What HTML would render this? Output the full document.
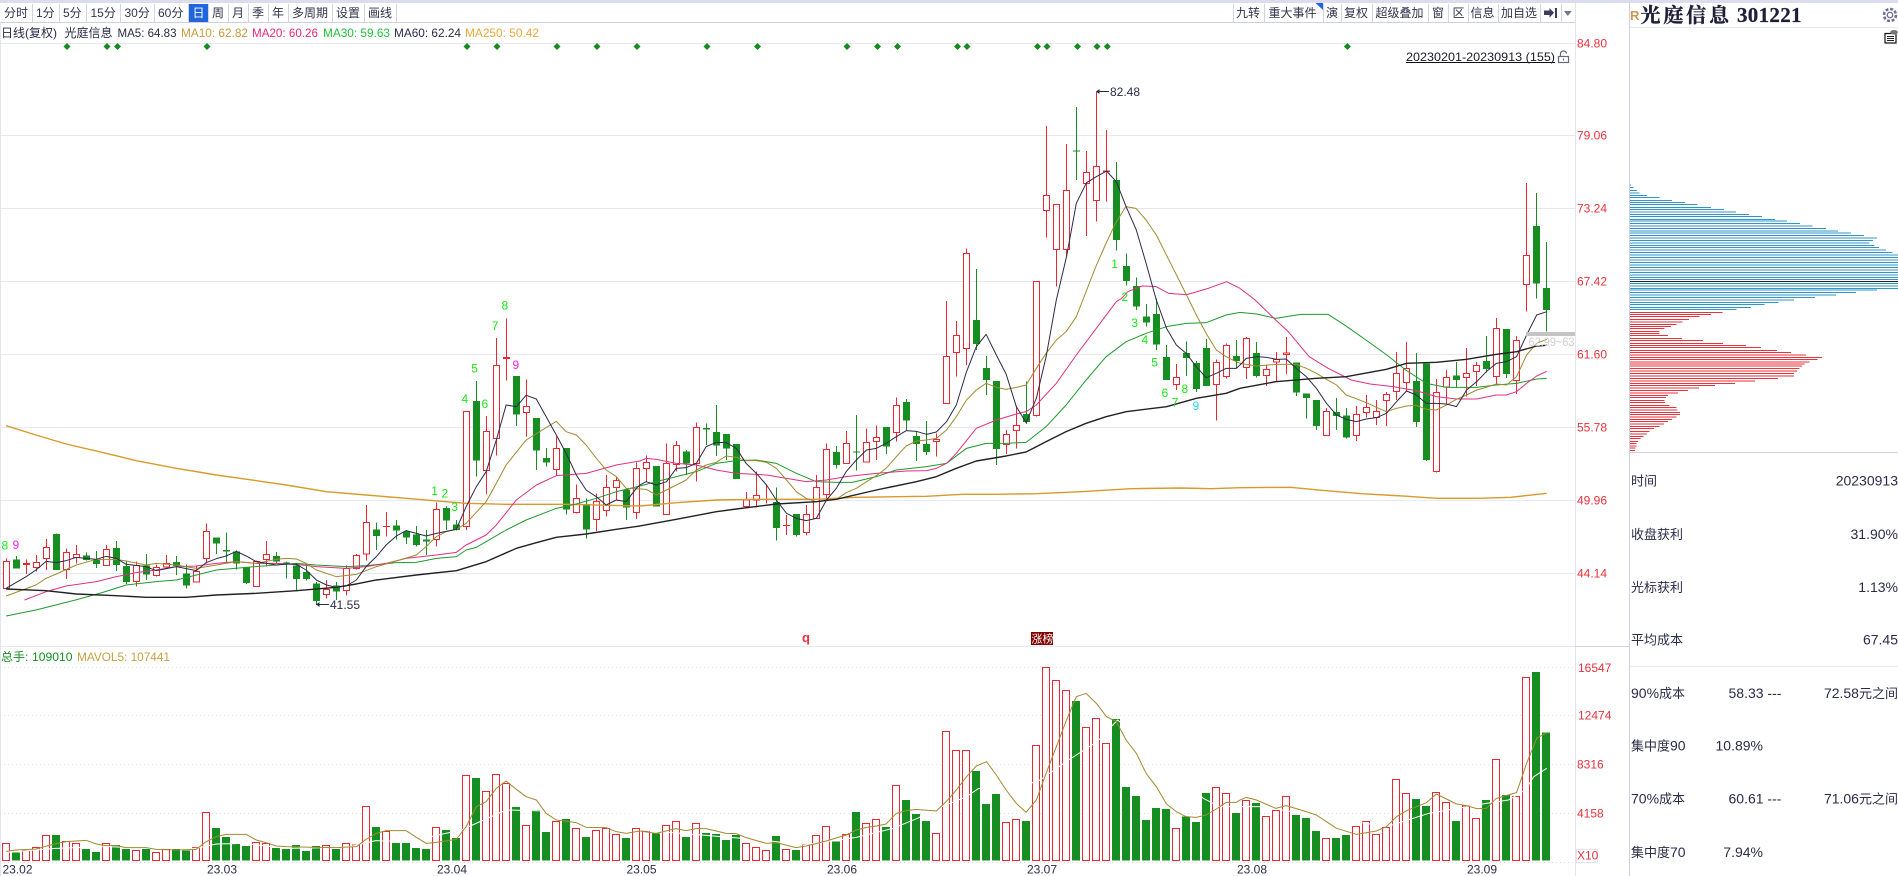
<!DOCTYPE html>
<html lang="zh-CN"><head><meta charset="utf-8"><title>光庭信息 301221</title>
<style>
html,body{margin:0;padding:0;background:#fff;overflow:hidden}
svg{display:block;font-family:"Liberation Sans","Noto Sans CJK SC",sans-serif;font-size:12px}
.l{fill:none;stroke-width:1;vector-effect:non-scaling-stroke;stroke-linejoin:round}
.h{stroke-width:1.4}
.c{vector-effect:non-scaling-stroke;shape-rendering:crispEdges;stroke-width:1}
.n{fill:#2b2b4a}.t{fill:#33334d;font-size:12px}.r{fill:#e8323c}.s{fill:#2b2b4a;font-size:13px}.d{font-size:14px}
.q{font-size:12px}.g{fill:#14e814}
</style></head><body>
<svg width="1898" height="876" viewBox="0 0 1898 876" xmlns="http://www.w3.org/2000/svg">
<rect width="1898" height="876" fill="#fff"/>
<rect width="1898" height="3" fill="#dcdcee"/>
<g shape-rendering="crispEdges">
<path d="M0 22.5H1575" stroke="#cfcfe2"/>
<path d="M0 43.5H1575M0 135.5H1575M0 208.5H1575M0 281.5H1575M0 354.5H1575M0 427.5H1575M0 500.5H1575M0 573.5H1575M0 646.5H1575" stroke="#e8e8f4"/>
<path d="M.5 22V876M1575.5 3V876" stroke="#e3e3f2"/>
<path d="M1575 646.5H1629M1629.5 3V876M1629 452.5H1898" stroke="#cfcfe6"/>
<path d="M1630 27.5H1898M1630 666.5H1898" stroke="#e8e8f4"/>
<path d="M32.5 4V22M59.5 4V22M86.5 4V22M120.5 4V22M154.5 4V22M188.5 4V22M208.5 4V22M228.5 4V22M248.5 4V22M268.5 4V22M288.5 4V22M332.5 4V22M364.5 4V22M396.5 4V22M1233.5 4V22M1264.5 4V22M1323.5 4V22M1341.5 4V22M1372.5 4V22M1428.5 4V22M1448.5 4V22M1468.5 4V22M1498.5 4V22M1540.5 4V22M1561.5 4V22" stroke="#d4d4e6"/>
<rect x="189" y="4" width="19" height="18" fill="#1f66dc"/>
<path d="M0 667.5H1575M0 715.5H1575M0 764.5H1575M0 813.5H1575M0 862.5H1575" stroke="#dcdce4" stroke-dasharray="1 3"/>
<rect x="1576.5" y="849.5" width="21" height="13" fill="#fff" stroke="#e3e3f2"/>
</g>
<polygon points="1315.5,3 1323,3 1323,10" fill="#1f66dc"/>
<!-- toolbar text -->
<g class="t">
<text class="t" x="4" y="17">分时</text><text class="t" x="36" y="17">1分</text><text class="t" x="63" y="17">5分</text><text class="t" x="90.5" y="17">15分</text><text class="t" x="124.5" y="17">30分</text><text class="t" x="158" y="17">60分</text>
<text x="192.5" y="17" fill="#fff" font-size="12">日</text><text class="t" x="212" y="17">周</text><text class="t" x="232" y="17">月</text><text class="t" x="252" y="17">季</text><text class="t" x="272" y="17">年</text><text class="t" x="292" y="17">多周期</text><text class="t" x="336" y="17">设置</text><text class="t" x="368" y="17">画线</text>
<text class="t" x="1236" y="17">九转</text><text class="t" x="1268.5" y="17">重大事件</text><text class="t" x="1326" y="17">演</text><text class="t" x="1344" y="17">复权</text><text class="t" x="1375.5" y="17">超级叠加</text><text class="t" x="1432" y="17">窗</text><text class="t" x="1452.5" y="17">区</text><text class="t" x="1470.5" y="17">信息</text><text class="t" x="1501" y="17">加自选</text>
</g>
<path d="M1544 10.500h5.500V8l4.500 4.800-4.500 4.800v-2.600h-5.500z" fill="#3a3a5e"/><rect x="1555" y="8" width="2" height="10" fill="#3a3a5e"/>
<polygon points="1564,11 1571.7,11 1567.8,16" fill="#73738f"/>
<!-- info line -->
<text class="n" x="1" y="37">日线(复权)</text><text class="n" x="64.5" y="37">光庭信息</text>
<text x="117.5" y="37" fill="#2b2b4a" textLength="59" lengthAdjust="spacingAndGlyphs">MA5: 64.83</text>
<text x="181" y="37" fill="#c89a3c" textLength="67" lengthAdjust="spacingAndGlyphs">MA10: 62.82</text>
<text x="252" y="37" fill="#e8287c" textLength="66" lengthAdjust="spacingAndGlyphs">MA20: 60.26</text>
<text x="323" y="37" fill="#1fc03c" textLength="67" lengthAdjust="spacingAndGlyphs">MA30: 59.63</text>
<text x="394" y="37" fill="#2b2b4a" textLength="67" lengthAdjust="spacingAndGlyphs">MA60: 62.24</text>
<text x="465" y="37" fill="#e8a83c" textLength="74" lengthAdjust="spacingAndGlyphs">MA250: 50.42</text>
<!-- diamonds -->
<g fill="#178a22">
<path d="M67 43l3.5 3.5-3.5 3.5-3.5-3.5zM107 43l3.5 3.5-3.5 3.5-3.5-3.5zM117.500 43l3.5 3.5-3.5 3.5-3.5-3.500zM207 43l3.5 3.5-3.5 3.5-3.5-3.5zM467 43l3.5 3.5-3.5 3.5-3.5-3.5zM497 43l3.5 3.5-3.5 3.5-3.5-3.5zM557 43l3.5 3.5-3.5 3.5-3.5-3.5zM597 43l3.5 3.5-3.5 3.5-3.5-3.5zM637 43l3.5 3.5-3.5 3.5-3.5-3.5zM707 43l3.5 3.5-3.5 3.5-3.5-3.5zM757.500 43l3.5 3.5-3.5 3.5-3.5-3.5zM847 43l3.5 3.5-3.5 3.5-3.5-3.5zM877.500 43l3.5 3.5-3.5 3.5-3.5-3.5zM897.500 43l3.5 3.5-3.5 3.5-3.5-3.5zM957.500 43l3.5 3.5-3.5 3.5-3.5-3.5zM967 43l3.5 3.5-3.5 3.5-3.5-3.5zM1037.500 43l3.5 3.5-3.5 3.5-3.5-3.5zM1047 43l3.5 3.5-3.5 3.5-3.5-3.5zM1077.500 43l3.5 3.5-3.5 3.5-3.5-3.5zM1097 43l3.5 3.5-3.5 3.5-3.5-3.5zM1107.300 43l3.5 3.5-3.5 3.5-3.5-3.5zM1347.400 43l3.5 3.5-3.5 3.5-3.5-3.5z"/>
</g>
<!-- date range -->
<text x="1406" y="61" fill="#1a1a2a" textLength="149" lengthAdjust="spacingAndGlyphs">20230201-20230913 (155)</text>
<path d="M1406 62.500H1555" stroke="#111" shape-rendering="crispEdges"/>
<g fill="none" stroke="#66667e" stroke-width="1.200"><rect x="1558.500" y="56.500" width="10" height="6"/><path d="M1560.500 56v-2.500a3 2.500 0 0 1 6 0"/><path d="M1563.500 58.500v2"/></g>
<!-- axis -->
<g class="r">
<text class="r" x="1577" y="47.500">84.80</text><text class="r" x="1577" y="139.500">79.06</text><text class="r" x="1577" y="212.500">73.24</text><text class="r" x="1577" y="285.500">67.42</text><text class="r" x="1577" y="358.500">61.60</text><text class="r" x="1577" y="431.500">55.78</text><text class="r" x="1577" y="504.500">49.96</text><text class="r" x="1577" y="577.500">44.14</text>
<text class="r" x="1578" y="672">16547</text><text class="r" x="1578" y="719.500">12474</text><text class="r" x="1577" y="768.500">8316</text><text class="r" x="1577" y="817.500">4158</text><text class="r" x="1577" y="859.500">X10</text>
</g>
<!-- candles -->
<g transform="translate(0,300) scale(1,.33333)">
<path class="c" fill="none" stroke="#ea2833" d="M6.500 775V865M26.500 778V822M36.500 765V815M46.500 717V810M66.500 745V837M76.500 735V790M106.500 735V797M136.500 785V860M156.500 793V830M166.500 765V805M196.500 797V848M206.500 670V790M256.500 782V860M266.500 723V800M326.500 840V895M346.500 797V887M356.500 762V808M366.500 615V782M386.500 636V710M436.500 608V740M466.500 335V690M486.500 348V582M496.500 114V467M506.500 55V242M526.500 238V410M556.500 410V527M576.500 553V640M596.500 580V693M606.500 525V650M616.500 530V600M636.500 488V657M646.500 466V545M666.500 430V643M676.500 423V515M696.500 368V545M746.500 576V620M756.500 515V622M766.500 555V610M786.500 645V705M806.500 615V707M816.500 525V657M826.500 430V595M846.500 393V492M866.500 385V487M876.500 376V480M896.500 292V425M936.500 400V470M946.500 3V312M956.500 63V230M966.500 -155V195M1006.500 390V462M1016.500 318V446M1036.500 -56V350M1046.500 -522V-187M1056.500 -287V-40M1066.500 -468V-130M1086.500 -447V-192M1096.500 -626V-235M1106.500 -510V-295M1176.500 192V270M1216.500 178V362M1226.500 130V236M1246.500 111V237M1266.500 193V258M1276.500 156V243M1286.500 111V222M1326.500 324V407M1356.500 318V423M1366.500 285V352M1376.500 300V375M1386.500 276V378M1396.500 156V300M1406.500 126V275M1436.500 237V517M1446.500 210V310M1466.500 144V290M1476.500 186V258M1496.500 54V254M1516.500 108V282M1526.500 -351V35"/>
<path class="c" fill="#fff" stroke="#ea2833" d="M3.500 784h6V865h-6zM23.500 790h6V794h-6zM33.500 788h6V802h-6zM43.500 742h6V775h-6zM63.500 757h6V808h-6zM73.500 763h6V772h-6zM103.500 748h6V796h-6zM133.500 796h6V845h-6zM153.500 803h6V826h-6zM163.500 791h6V801h-6zM193.500 814h6V846h-6zM203.500 694h6V776h-6zM253.500 785h6V860h-6zM263.500 764h6V778h-6zM323.500 868h6V884h-6zM343.500 806h6V872h-6zM353.500 767h6V805h-6zM363.500 667h6V762h-6zM383.500 679h6V680h-6zM433.500 628h6V718h-6zM463.500 335h6V680h-6zM483.500 394h6V512h-6zM493.500 196h6V415h-6zM503.500 172h6V176h-6zM523.500 320h6V337h-6zM553.500 446h6V508h-6zM573.500 596h6V637h-6zM593.500 604h6V658h-6zM603.500 562h6V632h-6zM613.500 542h6V562h-6zM633.500 506h6V637h-6zM643.500 488h6V505h-6zM663.500 490h6V643h-6zM673.500 436h6V494h-6zM693.500 382h6V490h-6zM743.500 600h6V620h-6zM753.500 586h6V600h-6zM763.500 598h6V599h-6zM783.500 676h6V677h-6zM803.500 643h6V698h-6zM813.500 562h6V655h-6zM823.500 448h6V584h-6zM843.500 430h6V491h-6zM863.500 427h6V486h-6zM873.500 412h6V425h-6zM893.500 316h6V398h-6zM933.500 418h6V425h-6zM943.500 169h6V310h-6zM953.500 106h6V157h-6zM963.500 -140h6V146h-6zM1003.500 403h6V434h-6zM1013.500 376h6V392h-6zM1033.500 -56h6V347h-6zM1043.500 -314h6V-268h-6zM1053.500 -287h6V-151h-6zM1063.500 -329h6V-151h-6zM1083.500 -383h6V-349h-6zM1093.500 -401h6V-298h-6zM1103.500 -387h6V-385h-6zM1173.500 232h6V254h-6zM1213.500 187h6V254h-6zM1223.500 136h6V230h-6zM1243.500 115h6V203h-6zM1263.500 208h6V227h-6zM1273.500 178h6V186h-6zM1283.500 159h6V163h-6zM1323.500 334h6V407h-6zM1353.500 344h6V406h-6zM1363.500 323h6V338h-6zM1373.500 335h6V352h-6zM1383.500 283h6V302h-6zM1393.500 220h6V275h-6zM1403.500 205h6V248h-6zM1433.500 277h6V515h-6zM1443.500 232h6V261h-6zM1463.500 220h6V233h-6zM1473.500 197h6V214h-6zM1493.500 86h6V230h-6zM1513.500 121h6V241h-6zM1523.500 -134h6V-47h-6z"/>
<path class="c" fill="none" stroke="#178e22" d="M16.500 768V806M56.500 700V810M86.500 757V782M96.500 753V804M116.500 723V813M126.500 782V852M146.500 762V840M176.500 768V825M186.500 793V866M216.500 712V762M226.500 698V790M236.500 752V808M246.500 802V852M276.500 756V790M286.500 785V835M296.500 790V875M306.500 790V842M316.500 846V915M336.500 846V900M376.500 668V750M396.500 660V718M406.500 690V732M416.500 678V740M426.500 690V765M446.500 618V690M456.500 660V692M476.500 243V530M516.500 228V378M536.500 354V510M546.500 444V500M566.500 444V644M586.500 595V716M626.500 565V660M656.500 498V620M686.500 450V525M706.500 370V435M716.500 315V468M726.500 402V480M736.500 432V537M776.500 562V722M796.500 642V710M836.500 438V505M856.500 345V512M886.500 381V462M906.500 297V392M916.500 395V483M926.500 363V465M976.500 -93V150M986.500 168V285M996.500 243V495M1026.500 245V372M1076.500 -579V-360M1116.500 -414V-148M1126.500 -140V-43M1136.500 -67V30M1146.500 12V80M1156.500 -5V150M1166.500 135V240M1186.500 125V228M1196.500 183V276M1206.500 117V258M1236.500 120V205M1256.500 126V232M1296.500 187V288M1306.500 280V356M1316.500 300V390M1336.500 294V390M1346.500 324V416M1416.500 159V381M1426.500 190V483M1456.500 186V262M1486.500 108V218M1506.500 87V234M1536.500 -321V-4M1546.500 -174V95"/>
<path class="c" fill="#178e22" stroke="none" d="M13 778h7V806h-7zM53 702h7V810h-7zM83 766h7V780h-7zM93 780h7V792h-7zM113 744h7V795h-7zM123 798h7V846h-7zM143 796h7V824h-7zM173 786h7V798h-7zM183 820h7V857h-7zM213 712h7V730h-7zM223 750h7V755h-7zM233 755h7V790h-7zM243 802h7V849h-7zM273 768h7V784h-7zM283 787h7V791h-7zM293 796h7V837h-7zM303 816h7V837h-7zM313 850h7V903h-7zM333 856h7V875h-7zM373 688h7V708h-7zM393 676h7V692h-7zM403 694h7V713h-7zM413 704h7V735h-7zM423 718h7V724h-7zM443 624h7V662h-7zM453 673h7V690h-7zM473 303h7V482h-7zM513 228h7V344h-7zM533 354h7V452h-7zM543 474h7V488h-7zM563 444h7V628h-7zM583 612h7V689h-7zM623 568h7V622h-7zM653 498h7V620h-7zM683 454h7V490h-7zM703 384h7V389h-7zM713 396h7V437h-7zM723 402h7V446h-7zM733 432h7V537h-7zM773 606h7V684h-7zM793 642h7V705h-7zM833 456h7V495h-7zM853 454h7V458h-7zM883 381h7V440h-7zM903 306h7V362h-7zM913 408h7V432h-7zM923 432h7V456h-7zM973 60h7V132h-7zM983 204h7V240h-7zM993 243h7V447h-7zM1023 342h7V366h-7zM1073 -449h7V-446h-7zM1113 -360h7V-180h-7zM1123 -102h7V-57h-7zM1133 -42h7V20h-7zM1143 50h7V68h-7zM1153 42h7V134h-7zM1163 171h7V240h-7zM1183 159h7V174h-7zM1193 189h7V267h-7zM1203 144h7V258h-7zM1233 168h7V183h-7zM1253 159h7V228h-7zM1293 187h7V278h-7zM1303 280h7V294h-7zM1313 300h7V378h-7zM1333 336h7V348h-7zM1343 346h7V413h-7zM1413 243h7V366h-7zM1423 190h7V480h-7zM1453 226h7V240h-7zM1483 183h7V207h-7zM1503 87h7V222h-7zM1533 -222h7V-49h-7zM1543 -36h7V30h-7z"/>
</g>
<!-- volume bars -->
<g transform="translate(0,600) scale(1,.33333)">
<path class="c" fill="#178e22" stroke="none" d="M12 757h8V782h-8zM52 705h8V782h-8zM82 747h8V782h-8zM92 756h8V782h-8zM112 735h8V782h-8zM122 747h8V782h-8zM142 747h8V782h-8zM172 747h8V782h-8zM182 752h8V782h-8zM212 684h8V782h-8zM222 711h8V782h-8zM232 732h8V782h-8zM242 738h8V782h-8zM272 744h8V782h-8zM282 747h8V782h-8zM292 735h8V782h-8zM302 753h8V782h-8zM312 738h8V782h-8zM332 747h8V782h-8zM372 681h8V782h-8zM392 729h8V782h-8zM402 729h8V782h-8zM412 744h8V782h-8zM422 747h8V782h-8zM442 690h8V782h-8zM452 714h8V782h-8zM472 534h8V782h-8zM512 621h8V782h-8zM532 630h8V782h-8zM542 696h8V782h-8zM562 657h8V782h-8zM582 711h8V782h-8zM622 714h8V782h-8zM652 701h8V782h-8zM682 711h8V782h-8zM702 699h8V782h-8zM712 702h8V782h-8zM722 720h8V782h-8zM732 705h8V782h-8zM772 708h8V782h-8zM792 750h8V782h-8zM832 724h8V782h-8zM852 636h8V782h-8zM882 681h8V782h-8zM902 600h8V782h-8zM912 642h8V782h-8zM922 663h8V782h-8zM972 513h8V782h-8zM982 612h8V782h-8zM992 582h8V782h-8zM1022 663h8V782h-8zM1072 303h8V782h-8zM1112 357h8V782h-8zM1122 561h8V782h-8zM1132 588h8V782h-8zM1142 660h8V782h-8zM1152 624h8V782h-8zM1162 627h8V782h-8zM1182 649h8V782h-8zM1192 666h8V782h-8zM1202 579h8V782h-8zM1232 639h8V782h-8zM1252 609h8V782h-8zM1292 645h8V782h-8zM1302 654h8V782h-8zM1312 693h8V782h-8zM1332 714h8V782h-8zM1342 705h8V782h-8zM1412 597h8V782h-8zM1422 618h8V782h-8zM1452 663h8V782h-8zM1482 600h8V782h-8zM1502 585h8V782h-8zM1532 216h8V782h-8zM1542 397h8V782h-8z"/>
<path class="c" fill="#fff" stroke="#ea2833" d="M2.500 730h7V782h-7zM22.500 751h7V782h-7zM32.500 742h7V782h-7zM42.500 706h7V782h-7zM62.500 724h7V782h-7zM72.500 730h7V782h-7zM102.500 730h7V782h-7zM132.500 751h7V782h-7zM152.500 757h7V782h-7zM162.500 748h7V782h-7zM192.500 742h7V782h-7zM202.500 637h7V782h-7zM252.500 727h7V782h-7zM262.500 730h7V782h-7zM322.500 736h7V782h-7zM342.500 730h7V782h-7zM352.500 735h7V782h-7zM362.500 619h7V782h-7zM382.500 694h7V782h-7zM432.500 682h7V782h-7zM462.500 526h7V782h-7zM482.500 574h7V782h-7zM492.500 523h7V782h-7zM502.500 550h7V782h-7zM522.500 676h7V782h-7zM552.500 664h7V782h-7zM572.500 685h7V782h-7zM592.500 691h7V782h-7zM602.500 685h7V782h-7zM612.500 703h7V782h-7zM632.500 685h7V782h-7zM642.500 693h7V782h-7zM662.500 676h7V782h-7zM672.500 664h7V782h-7zM692.500 670h7V782h-7zM742.500 730h7V782h-7zM752.500 742h7V782h-7zM762.500 751h7V782h-7zM782.500 748h7V782h-7zM802.500 733h7V782h-7zM812.500 706h7V782h-7zM822.500 679h7V782h-7zM842.500 703h7V782h-7zM862.500 670h7V782h-7zM872.500 658h7V782h-7zM892.500 556h7V782h-7zM932.500 700h7V782h-7zM942.500 394h7V782h-7zM952.500 451h7V782h-7zM962.500 451h7V782h-7zM1002.500 667h7V782h-7zM1012.500 658h7V782h-7zM1032.500 436h7V782h-7zM1042.500 202h7V782h-7zM1052.500 241h7V782h-7zM1062.500 271h7V782h-7zM1082.500 382h7V782h-7zM1092.500 355h7V782h-7zM1102.500 430h7V782h-7zM1172.500 685h7V782h-7zM1212.500 562h7V782h-7zM1222.500 580h7V782h-7zM1242.500 601h7V782h-7zM1262.500 649h7V782h-7zM1272.500 631h7V782h-7zM1282.500 589h7V782h-7zM1322.500 715h7V782h-7zM1352.500 679h7V782h-7zM1362.500 664h7V782h-7zM1372.500 703h7V782h-7zM1382.500 683h7V782h-7zM1392.500 538h7V782h-7zM1402.500 580h7V782h-7zM1432.500 577h7V782h-7zM1442.500 607h7V782h-7zM1462.500 618h7V782h-7zM1472.500 655h7V782h-7zM1492.500 478h7V782h-7zM1512.500 589h7V782h-7zM1522.500 232h7V782h-7z"/>
</g>
<!-- MA lines part 1 -->
<g transform="translate(0,300) scale(.40816,.33333)">
<polyline class="l h" stroke="#d89a2a" points="15,377 88,405 162,432 260,460 334,482 432,505 530,525 628,542 701,555 800,575 897,585 995,595 1093,605 1142,610 1240,613 1387,613 1568,618"/>
<polyline class="l" stroke="#1e9a2c" points="15,948 88,930 185,900 250,878 309,855 383,845 432,840 481,825 530,810 603,802 677,795 726,790 775,795 848,800 897,797 971,788 1020,787 1069,775 1118,770 1142,750 1167,742 1191,725 1240,690 1289,660 1338,637 1363,625 1412,612 1461,595 1510,575 1568,558"/>
<polyline class="l" stroke="#e03080" points="60,900 113,875 162,858 236,845 285,830 334,818 383,810 432,800 481,798 530,790 579,785 628,790 677,790 726,793 775,800 848,805 897,800 946,790 995,775 1069,765 1118,757 1142,735 1191,705 1216,675 1265,600 1314,555 1363,527 1436,520 1510,495 1568,483"/>
<polyline class="l" stroke="#a08a30" points="15,888 88,855 113,835 138,822 187,795 236,778 285,778 309,783 358,795 383,790 432,795 481,805 530,795 579,785 628,790 677,778 701,775 726,777 750,790 775,810 824,830 873,823 922,800 971,783 1020,765 1044,740 1069,710 1093,695 1118,688 1142,670 1191,605 1216,550 1240,495 1289,420 1363,364 1387,395 1412,405 1436,435 1461,475 1485,510 1510,530 1534,565 1568,567"/>
<polyline class="l h" stroke="#222" points="15,867 113,872 187,882 285,887 358,892 456,892 530,885 628,880 726,872 824,862 873,852 922,840 1020,825 1118,812 1191,785 1265,745 1314,728 1363,712 1436,702 1510,688 1568,678"/>
<polyline class="l" stroke="#2b2b4a" points="15,865 64,830 88,810 113,784 138,788 162,782 187,772 236,778 260,769 285,775 309,793 358,800 383,812 432,800 481,812 505,788 530,776 554,768 579,754 603,768 628,785 677,795 701,792 726,793 750,810 775,840 800,855 824,862 848,858 873,840 897,800 922,770 946,735 971,708 995,692 1020,700 1044,708 1069,700 1118,688 1142,620 1167,560 1191,515 1216,420 1240,315 1265,320 1289,286 1314,297 1363,405 1387,460 1412,525 1436,570 1461,590 1485,615 1510,600 1534,605 1559,565 1568,555"/>
</g>
<g transform="translate(640,300) scale(.40816,.33333)">
<polyline class="l h" stroke="#d89a2a" points="0,618 89,608 187,600 285,598 432,598 530,592 628,590 702,589 790,583 873,583 971,581 1080,575 1203,566 1325,564 1400,566 1470,563"/>
<polyline class="l" stroke="#1e9a2c" points="0,558 40,545 89,530 138,515 187,490 236,482 285,480 334,490 383,520 432,545 481,547 520,547 579,530 628,510 702,500 751,490 800,445 848,430 897,430 946,427 995,380 1044,315 1093,240 1142,170 1191,125 1240,100 1290,80 1338,70 1387,68 1436,45 1470,37"/>
<polyline class="l" stroke="#e03080" points="0,483 15,475 40,478 89,490 138,495 187,510 236,520 310,525 359,535 407,545 457,540 505,530 579,520 652,513 702,512 726,505 751,490 775,460 824,385 873,360 922,342 946,335 971,315 1020,250 1069,165 1118,85 1167,5 1180,-5 1195,-25 1230,-42 1265,-40 1295,-20 1340,-16 1390,-34 1437,-55 1470,-35"/>
<polyline class="l" stroke="#a08a30" points="0,567 15,568 40,585 65,570 89,555 113,540 138,510 162,495 187,487 211,468 236,472 260,482 285,482 310,487 334,505 359,540 383,575 407,595 432,605 457,600 481,598 505,578 530,565 555,545 579,527 603,505 628,470 652,438 677,423 702,420 726,415 751,390 775,350 800,300 824,270 848,250 873,262 897,268 922,262 946,255 971,205 995,160 1020,120 1044,95 1069,50 1085,0 1115,-95 1140,-165 1165,-230 1190,-280 1215,-275 1240,-240 1265,-195 1300,-110 1345,0 1363,45 1387,100 1412,150 1436,170 1461,185 1470,190"/>
<polyline class="l h" stroke="#222" points="0,678 89,658 187,635 236,627 334,612 432,605 481,598 579,570 677,545 726,530 775,505 824,483 897,468 946,456 995,425 1044,395 1093,370 1142,350 1191,335 1290,320 1363,295 1436,280 1470,265"/>
<polyline class="l" stroke="#2b2b4a" points="0,555 15,545 40,555 65,545 89,505 113,503 138,490 162,440 187,427 211,428 236,445 260,490 285,520 310,555 334,600 359,640 383,655 407,662 432,655 457,600 481,565 505,515 530,480 555,450 579,445 603,430 628,410 652,392 677,394 702,403 726,396 751,365 775,315 800,215 824,140 848,103 873,165 897,222 922,320 946,368 971,295 995,170 1020,0 1045,-130 1069,-290 1094,-352 1118,-370 1143,-387 1167,-355 1191,-280 1216,-210 1240,-110 1265,0 1290,85 1314,135 1338,160 1363,200 1387,233 1412,220 1436,205 1461,205 1470,195"/>
</g>
<g transform="translate(1240,300) scale(.41964,.33333)">
<polyline class="l h" stroke="#d89a2a" points="0,563 120,562 195,571 290,581 400,589 468,595 570,595 645,592 731,580"/>
<polyline class="l" stroke="#1e9a2c" points="0,37 40,42 85,55 145,43 210,43 255,80 300,120 350,165 395,210 444,250 492,262 564,262 611,255 659,250 707,237 731,235"/>
<polyline class="l" stroke="#e03080" points="0,-35 36,0 85,60 115,95 165,170 210,205 265,240 310,252 365,260 420,272 468,290 516,297 564,297 611,285 635,285 659,275 683,250 707,228 731,214"/>
<polyline class="l" stroke="#a08a30" points="0,190 40,198 87,193 134,193 158,205 182,220 206,238 230,255 253,285 277,296 301,308 325,322 349,335 373,325 397,318 420,316 444,328 468,330 492,315 516,298 540,285 564,270 587,262 611,252 635,255 659,230 683,165 707,130 731,118"/>
<polyline class="l h" stroke="#222" points="0,265 85,245 182,235 253,230 349,208 397,190 468,187 540,178 611,163 659,155 707,138 731,136"/>
<polyline class="l" stroke="#2b2b4a" points="0,195 15,175 40,170 63,172 87,178 110,177 134,205 158,230 182,265 206,310 230,345 253,358 277,365 301,357 325,353 349,340 373,305 397,273 420,285 444,310 468,310 492,312 516,320 540,270 564,245 587,215 611,190 635,185 659,170 683,105 707,45 731,35"/>
</g>
<!-- volume MA -->
<g transform="translate(0,600) scale(.40816,.33333)">
<polyline class="l" stroke="#fff" points="15,757 137,745 260,740 380,745 480,745 530,732 600,730 700,745 850,742 920,722 1000,725 1130,690 1240,630 1568,640"/>
<polyline class="l" stroke="#a08a30" points="15,754 39,750 88,747 137,731 162,725 211,721 236,732 260,737 285,737 309,743 358,743 383,748 432,750 481,748 505,725 530,710 554,703 603,703 628,720 652,728 677,738 701,740 775,742 824,743 873,740 897,718 922,700 946,692 995,692 1020,712 1044,730 1069,727 1118,718 1142,680 1167,620 1191,605 1216,565 1240,543 1265,568 1289,590 1314,600 1338,640 1363,660 1412,668 1436,682 1485,683 1510,695 1534,700 1568,693"/>
</g>
<g transform="translate(640,600) scale(.40816,.33333)">
<polyline class="l" stroke="#fff" points="0,690 300,720 400,735 530,712 620,685 680,655 730,625 800,590 830,565 900,575 980,540 1050,480 1120,425 1170,360 1290,480 1380,595 1420,620 1470,620"/>
<polyline class="l" stroke="#a08a30" points="0,693 39,700 88,686 113,692 137,686 162,686 211,700 236,701 260,713 309,730 334,728 382,743 407,738 456,723 505,705 530,690 555,682 579,678 603,672 628,640 652,632 677,628 726,633 750,605 775,570 800,530 824,498 849,485 873,525 897,570 922,610 946,637 971,600 995,520 1020,440 1045,360 1069,290 1093,280 1118,310 1143,350 1167,365 1191,420 1216,460 1240,520 1265,560 1290,612 1314,635 1338,650 1363,652 1387,645 1412,627 1436,607 1461,607 1470,600"/>
</g>
<g transform="translate(1240,600) scale(.41964,.33333)">
<polyline class="l" stroke="#fff" points="0,620 50,620 350,680 450,640 587,610 640,600 680,570 700,530 731,505"/>
<polyline class="l" stroke="#a08a30" points="0,600 15,592 39,600 85,625 110,617 158,635 182,645 206,665 230,685 277,703 325,693 349,680 373,650 397,632 444,608 468,582 492,597 516,612 540,617 564,626 587,625 611,595 659,578 683,490 707,415 731,398"/>
</g>
<!-- sequence numbers -->
<g class="q">
<text class="g" x="1.500" y="549.500">8</text><text x="12.500" y="549" fill="#ff22ee">9</text>
<text class="g" x="431.300" y="494.800">1</text><text class="g" x="441.500" y="497.500">2</text><text class="g" x="451.300" y="511.200">3</text><text class="g" x="461.500" y="402.800">4</text><text class="g" x="471.300" y="372.500">5</text><text class="g" x="481.500" y="407.800">6</text><text class="g" x="491.700" y="329.800">7</text><text class="g" x="501.500" y="309.500">8</text><text x="512.500" y="368.800" fill="#ff22ee">9</text>
<text class="g" x="1111.300" y="267.800">1</text><text class="g" x="1121.500" y="301">2</text><text class="g" x="1131.300" y="326.800">3</text><text class="g" x="1141.500" y="343.800">4</text><text class="g" x="1151.300" y="366.500">5</text><text class="g" x="1161.500" y="396.800">6</text><text class="g" x="1171.700" y="406.500">7</text><text class="g" x="1181.500" y="392.800">8</text><text x="1192.500" y="409.800" fill="#22ddee">9</text>
</g>
<!-- high low labels -->
<path d="M1097 91.500h12M318 604.500h11" stroke="#2b2b4a" shape-rendering="crispEdges"/>
<path d="M1096 91.500l3.500-2.500v5zM316 604.500l3.500-2.500v5z" fill="#2b2b4a"/>
<text class="n" x="1110" y="96">82.48</text><text class="n" x="330" y="609">41.55</text>
<!-- current price -->
<rect x="1526" y="332" width="49" height="4" fill="#c4c4c4"/>
<text x="1528.500" y="346" fill="#cfcfcf" textLength="46" lengthAdjust="spacingAndGlyphs">62.99~63</text>
<!-- markers -->
<text x="802" y="642" fill="#e8323c" font-weight="bold" font-size="13">q</text>
<rect x="1031" y="632" width="22" height="13" fill="#800000"/>
<text x="1031.500" y="642.500" fill="#fff" font-size="11">涨榜</text>
<!-- volume title -->
<text x="1" y="661" fill="#178e22">总手:</text><text x="32" y="661" fill="#178e22" textLength="40.500" lengthAdjust="spacingAndGlyphs">109010</text>
<text x="77" y="661" fill="#c8a040" textLength="93" lengthAdjust="spacingAndGlyphs">MAVOL5: 107441</text>
<!-- x labels -->
<g class="n"><text class="n" x="2.500" y="873.500">23.02</text><text class="n" x="207" y="873.500">23.03</text><text class="n" x="437" y="873.500">23.04</text><text class="n" x="626.500" y="873.500">23.05</text><text class="n" x="827" y="873.500">23.06</text><text class="n" x="1027" y="873.500">23.07</text><text class="n" x="1237" y="873.500">23.08</text><text class="n" x="1467" y="873.500">23.09</text></g>
<!-- right panel header -->
<text x="1630" y="20" fill="#c89a50" font-weight="bold" font-size="13">R</text>
<text x="1640.500" y="22" fill="#1f1f3a" stroke="#1f1f3a" stroke-width=".35" font-weight="bold" font-size="20" style="font-family:'Liberation Serif','Noto Serif CJK SC',serif" textLength="88.500">光庭信息</text>
<text x="1737" y="22" fill="#1f1f3a" stroke="#1f1f3a" stroke-width=".25" font-weight="bold" font-size="21" style="font-family:'Liberation Serif','Noto Serif CJK SC',serif" textLength="64.500">301221</text>
<g fill="none" stroke="#70708e"><circle cx="1890" cy="15" r="6" stroke-width="2.600" stroke-dasharray="3 1.700"/><circle cx="1890" cy="15" r="2.700" stroke-width="1.400"/></g>
<g><rect x="1885" y="33.500" width="11" height="9.500" fill="#fff" stroke="#111" stroke-width="1.200"/><path d="M1887 36.500h7M1887 38.500h7M1887 40.500h7" stroke="#222" stroke-width=".9"/><ellipse cx="1894" cy="32.300" rx="3.800" ry="2.300" fill="#777"/></g>
<!-- chip distribution -->
<g clip-path="url(#cp)">
<g transform="translate(1240,0) scale(.41964,.33333)">
<path class="c" fill="none" stroke="#2f96c8" d="M927 555H932M927 563H938M927 571H946M927 579H952M927 586H970M927 592H1000M927 601H1030M927 607H1060M927 613H1090M927 622H1122M927 629H1153M927 636H1182M927 643H1213M927 650H1244M927 658H1275M927 663H1303M927 670H1334M927 678H1364M927 685H1396M927 693H1425M927 699H1456M927 706H1487M927 714H1518M927 721H1508M927 729H1500M927 736H1512M927 742H1523M927 750H1540M927 757H1555M927 765H1568M927 772H1568M927 780H1568M927 787H1568M927 795H1568M927 802H1568M927 810H1568M927 817H1568M927 825H1568M927 832H1568M927 838H1568M927 851H1568M927 858H1568M927 866H1568M927 870H1518M927 878H1468M927 885H1420M927 892H1370M927 900H1320M927 907H1283M927 914H1250M927 922H1218M927 928H1183"/>
<path class="c" fill="none" stroke="#222" d="M927 844H1568"/>
</g>
<g transform="translate(1240,300) scale(.41964,.33333)">
<path class="c" fill="none" stroke="#e8323c" d="M927 37H1150M927 43H1122M927 49H1095M927 58H1070M927 66H1055M927 73H1040M927 79H1027M927 86H1012M927 94H1000M927 100H1000M927 106H1020M927 115H1053M927 122H1103M927 130H1151M927 136H1206M927 142H1242M927 151H1280M927 157H1313M927 165H1349M927 172H1387M927 178H1376M927 186H1357M927 192H1345M927 198H1339M927 205H1333M927 213H1327M927 221H1320M927 228H1320M927 235H1282M927 243H1227M927 250H1180M927 257H1132M927 264H1094M927 271H1068M927 279H1044M927 286H1020M927 293H1015M927 301H1012M927 308H1013M927 316H1023M927 323H1040M927 330H1042M927 337H1049M927 344H1049M927 351H1040M927 358H1029M927 365H1020M927 372H1010M927 379H1000M927 386H987M927 394H976M927 402H970M927 409H962M927 416H954M927 424H949M927 431H945M927 438H945M927 444H942M927 451H941"/>
</g>
</g>
<clipPath id="cp"><rect x="1630" y="150" width="268" height="302"/></clipPath>
<!-- stats -->
<g>
<text class="s" x="1631" y="485.500">时间</text><text class="s d" x="1898" y="485.500" text-anchor="end">20230913</text>
<text class="s" x="1631" y="539">收盘获利</text><text class="s d" x="1898" y="539" text-anchor="end">31.90%</text>
<text class="s" x="1631" y="592">光标获利</text><text class="s d" x="1898" y="592" text-anchor="end">1.13%</text>
<text class="s" x="1631" y="644.500">平均成本</text><text class="s d" x="1898" y="644.500" text-anchor="end">67.45</text>
<text class="s" x="1631" y="698"><tspan class="d">90%</tspan>成本</text><text class="s d" x="1728.500" y="698">58.33 ---</text><text class="s" x="1898" y="698" text-anchor="end"><tspan class="d">72.58</tspan>元之间</text>
<text class="s" x="1631" y="750.500">集中度<tspan class="d">90</tspan></text><text class="s d" x="1763" y="750.500" text-anchor="end">10.89%</text>
<text class="s" x="1631" y="803.500"><tspan class="d">70%</tspan>成本</text><text class="s d" x="1728.500" y="803.500">60.61 ---</text><text class="s" x="1898" y="803.500" text-anchor="end"><tspan class="d">71.06</tspan>元之间</text>
<text class="s" x="1631" y="857">集中度<tspan class="d">70</tspan></text><text class="s d" x="1763" y="857" text-anchor="end">7.94%</text>
</g>
</svg>
</body></html>
